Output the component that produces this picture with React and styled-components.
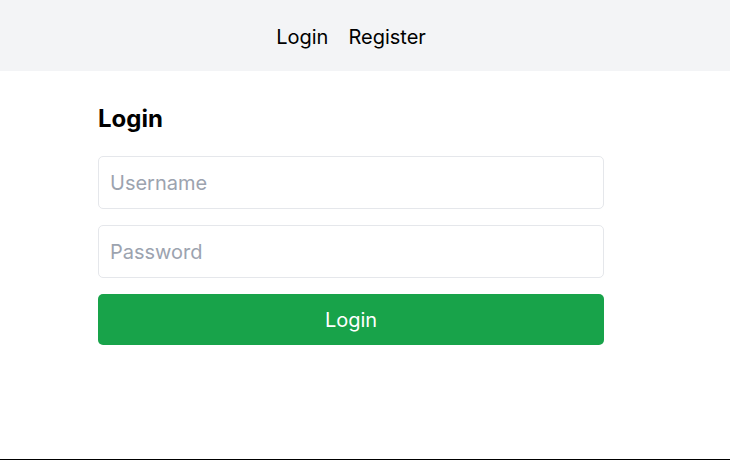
import React from "react";
import styled, {createGlobalStyle} from "styled-components";

const GlobalStyle = createGlobalStyle`
  html, body {
    margin: 0;
    padding: 0;
    background: #ffffff;
  }
  body {
    font-family: Inter, "Noto Sans", sans-serif;
    color: #000000;
  }
  * {
    box-sizing: border-box;
  }
`;

const Page = styled.div`
  height: 460px;
  border-bottom: 1px solid #000000;
  display: flex;
  flex-direction: column;
`;

const Header = styled.header`
  height: 71px;
  background: #f3f4f6;
  display: flex;
  align-items: center;
  justify-content: center;
  padding: 2px 28px 0 0;
`;

const NavLink = styled.a`
  font-size: 20px;
  color: #000000;
  text-decoration: none;
  cursor: pointer;
  margin: 0 10px;
`;

const Main = styled.main`
  display: flex;
  justify-content: center;
  padding: 32px 28px 0 0;
`;

const Form = styled.form`
  width: 506px;
  display: flex;
  flex-direction: column;
  gap: 16px;
`;

const Title = styled.h1`
  margin: 0 0 5px;
  font-size: 24px;
  font-weight: 700;
  line-height: 32px;
`;

const Input = styled.input`
  height: 53px;
  padding: 0 11px;
  border: 1px solid #e5e7eb;
  border-radius: 5px;
  font-family: inherit;
  font-size: 20px;
  color: #111827;
  outline: none;

  &::placeholder {
    color: #9ca3af;
  }
`;

const Button = styled.button`
  height: 51px;
  border: none;
  border-radius: 5px;
  background: #18a34a;
  color: #ffffff;
  font-family: inherit;
  font-size: 20px;
  cursor: pointer;
`;

export default function App() {
    return (
        <>
            <GlobalStyle/>
            <Page>
                <Header>
                    <NavLink>Login</NavLink>
                    <NavLink>Register</NavLink>
                </Header>
                <Main>
                    <Form onSubmit={(e) => e.preventDefault()}>
                        <Title>Login</Title>
                        <Input type="text" placeholder="Username"/>
                        <Input type="password" placeholder="Password"/>
                        <Button type="submit">Login</Button>
                    </Form>
                </Main>
            </Page>
        </>
    );
}
